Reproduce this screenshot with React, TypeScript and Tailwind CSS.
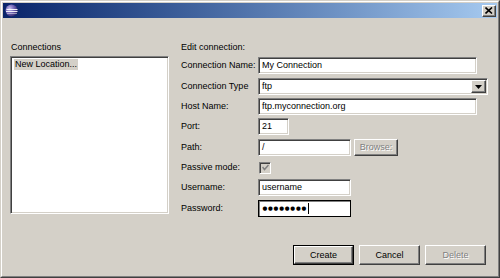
import React from "react";

const raised =
  "border border-t-white border-l-white border-r-[#404040] border-b-[#404040] shadow-[inset_-1px_-1px_0_#808080,inset_1px_1px_0_#d4d0c8]";
const sunken =
  "border border-t-[#808080] border-l-[#808080] border-r-white border-b-white shadow-[inset_1px_1px_0_#404040,inset_-1px_-1px_0_#d4d0c8]";
const disabledText = "text-[#808080] [text-shadow:1px_1px_0_#ffffff]";

function Row({ label, h, children }: { label: string; h: string; children: React.ReactNode }) {
  return (
    <div className={`flex items-start ${h}`}>
      <div className="w-[77px] h-[17px] flex items-center">{label}</div>
      {children}
    </div>
  );
}

function TextBox({ w, value }: { w: string; value: string }) {
  return (
    <div className={`${w} h-[17px] bg-white ${sunken} flex items-center pl-[3px] whitespace-nowrap overflow-hidden`}>
      {value}
    </div>
  );
}

function Btn({ label, def, disabled }: { label: string; def?: boolean; disabled?: boolean }) {
  const inner = (
    <div className={`w-full h-full ${raised} bg-[#d4d0c8] flex items-center justify-center ${disabled ? disabledText : ""}`}>
      {label}
    </div>
  );
  return def ? (
    <div className="w-[61px] h-[20px] border border-black">{inner}</div>
  ) : (
    <div className="w-[61px] h-[20px]">{inner}</div>
  );
}

export default function App() {
  return (
    <div className="w-[500px] h-[278px] bg-[#d4d0c8] border border-t-[#d4d0c8] border-l-[#d4d0c8] border-r-[#404040] border-b-[#404040] font-['Liberation_Sans',Arial,sans-serif] text-[9px] text-black leading-[11px]">
      <div className="w-full h-full border border-t-white border-l-white border-r-[#808080] border-b-[#808080] p-px flex flex-col">
        {/* title bar */}
        <div className="h-[15px] bg-gradient-to-r from-[#0a246a] to-[#a6caf0] flex items-center justify-between px-[1px]">
          <svg width="13" height="13" viewBox="0 0 13 13" className="ml-[1px]">
            <defs>
              <radialGradient id="g" cx="0.35" cy="0.35" r="0.75">
                <stop offset="0" stopColor="#c9c3ef" />
                <stop offset="0.5" stopColor="#6f63b5" />
                <stop offset="1" stopColor="#2b2160" />
              </radialGradient>
            </defs>
            <circle cx="6.5" cy="6.5" r="6" fill="url(#g)" />
            <rect x="1.5" y="5" width="11" height="1" fill="#ffffff" opacity="0.9" />
            <rect x="1" y="7" width="11.5" height="1" fill="#ffffff" opacity="0.9" />
            <rect x="2" y="9" width="10" height="0.8" fill="#ffffff" opacity="0.6" />
          </svg>
          <div className={`w-[14px] h-[12px] bg-[#d4d0c8] ${raised} flex items-center justify-center`}>
            <svg width="8" height="7" viewBox="0 0 8 7">
              <path d="M0.5 0.5 L7 6.5 M7 0.5 L0.5 6.5" stroke="#000" strokeWidth="1.6" />
            </svg>
          </div>
        </div>

        {/* body */}
        <div className="flex-1 flex flex-col">
          <div className="flex pt-[24px] pl-[7px]">
            {/* left */}
            <div className="w-[159px] flex flex-col">
              <div className="pl-[1px] h-[11px] mb-[3px]">Connections</div>
              <div className={`h-[158px] bg-white ${sunken} pt-[2px] pl-[3px]`}>
                <span className="bg-[#d4d0c8] px-[1px] inline-block h-[11px]">New Location...</span>
              </div>
            </div>
            {/* right */}
            <div className="ml-[12px] flex flex-col">
              <div className="h-[11px] mb-[4px]">Edit connection:</div>
              <Row label="Connection Name:" h="h-[21px]">
                <TextBox w="w-[219px]" value="My Connection" />
              </Row>
              <Row label="Connection Type" h="h-[20px]">
                <div className={`w-[230px] h-[17px] bg-white ${sunken} flex items-center justify-between pl-[3px] pr-[1px]`}>
                  <span>ftp</span>
                  <div className={`w-[15px] h-[13px] bg-[#d4d0c8] ${raised} flex items-center justify-center`}>
                    <svg width="7" height="4" viewBox="0 0 7 4">
                      <path d="M0 0 H7 L3.5 4 Z" fill="#000" />
                    </svg>
                  </div>
                </div>
              </Row>
              <Row label="Host Name:" h="h-[20px]">
                <TextBox w="w-[219px]" value="ftp.myconnection.org" />
              </Row>
              <Row label="Port:" h="h-[21px]">
                <TextBox w="w-[31px]" value="21" />
              </Row>
              <Row label="Path:" h="h-[20px]">
                <TextBox w="w-[93px]" value="/" />
                <div className={`ml-[3px] w-[44px] h-[17px] bg-[#d4d0c8] ${raised} flex items-center justify-center ${disabledText}`}>
                  Browse:
                </div>
              </Row>
              <Row label="Passive mode:" h="h-[20px]">
                <div className="h-[17px] flex items-center pl-[1px]">
                  <div className={`w-[12px] h-[12px] bg-[#d4d0c8] ${sunken} flex items-center justify-center`}>
                    <svg width="7" height="7" viewBox="0 0 7 7">
                      <path d="M0.5 3 L2.5 5.5 L6.5 1" stroke="#808080" strokeWidth="1.5" fill="none" />
                    </svg>
                  </div>
                </div>
              </Row>
              <Row label="Username:" h="h-[21px]">
                <TextBox w="w-[93px]" value="username" />
              </Row>
              <Row label="Password:" h="h-[17px]">
                <div className="w-[93px] h-[17px] bg-white border border-black shadow-[inset_1px_1px_0_#808080] flex items-center pl-[3px]">
                  {Array.from({ length: 8 }).map((_, i) => (
                    <span key={i} className="inline-block w-[5.6px] text-center font-['DejaVu_Sans',sans-serif] text-[5.5px] leading-[7px]">
                      ●
                    </span>
                  ))}
                  <span className="inline-block w-px h-[11px] bg-black ml-[1px]" />
                </div>
              </Row>
            </div>
          </div>
          <div className="mt-auto flex justify-end gap-[5px] pr-[11px] pb-[10px]">
            <Btn label="Create" def />
            <Btn label="Cancel" />
            <Btn label="Delete" disabled />
          </div>
        </div>
      </div>
    </div>
  );
}
